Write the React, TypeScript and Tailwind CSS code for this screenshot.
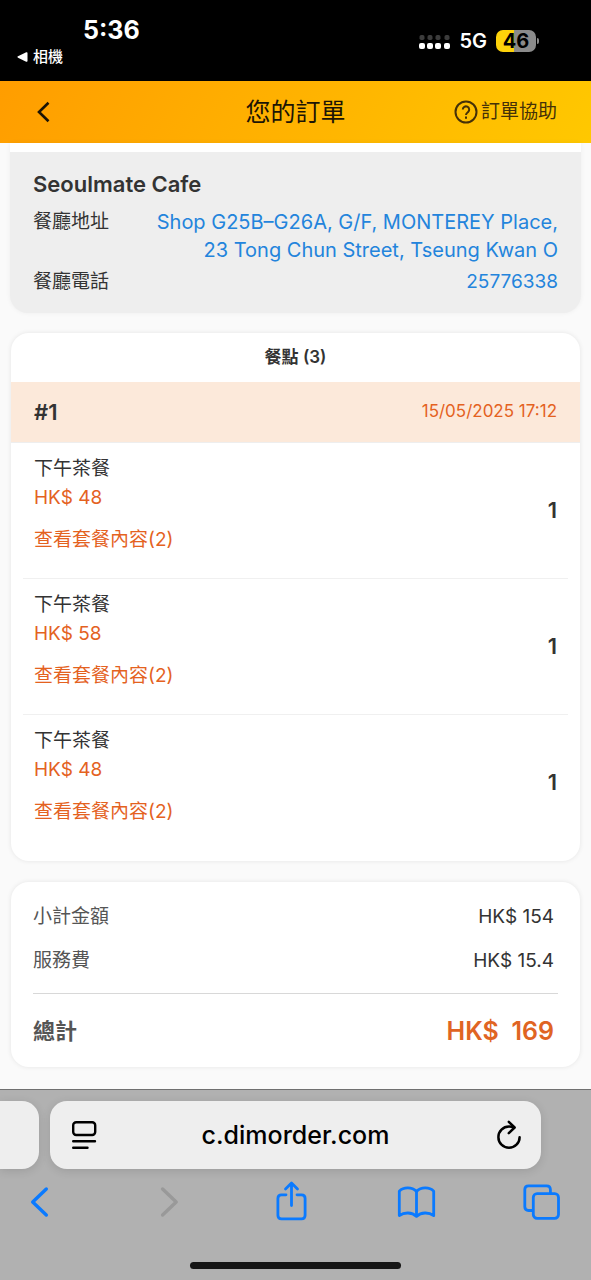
import React from 'react';

interface OrderItem {
  id: number;
  name: string;
  price: string;
  setCount: number;
  quantity: number;
}

const items: OrderItem[] = [
  { id: 1, name: '下午茶餐', price: 'HK$ 48', setCount: 2, quantity: 1 },
  { id: 2, name: '下午茶餐', price: 'HK$ 58', setCount: 2, quantity: 1 },
  { id: 3, name: '下午茶餐', price: 'HK$ 48', setCount: 2, quantity: 1 },
];

const StatusBar: React.FC = () => (
  <div className="flex h-[81px] items-start justify-between bg-black pl-[17px] pr-[52px] pt-4 text-white">
    <div>
      <div className="pl-[66px] text-[25px] font-bold leading-7">5:36</div>
      <button className="flex items-center gap-[5px] text-[15px] font-medium leading-[26px]">
        <svg width="11" height="10" viewBox="0 0 11 10" fill="currentColor" aria-hidden="true">
          <path d="M1 4.3 9.2.3Q10.5 0 10.5 1v8q0 1-1.3.7L1 5.700Q-.2 5 1 4.300z" />
        </svg>
        相機
      </button>
    </div>
    <div className="flex items-center pt-[11px]">
      <svg width="31" height="15" viewBox="0 0 31 15" aria-hidden="true">
        {[0, 8, 16, 25].map((x) => (
          <g key={x}>
            <rect x={x + 0.5} y="1" width="5" height="5" rx="1.8" fill="#3c3c3c" />
            <rect x={x} y="9" width="6" height="6" rx="2" fill="#fff" />
          </g>
        ))}
      </svg>
      <span className="ml-[9px] text-xl font-semibold leading-7">5G</span>
      <div className="ml-[9px] flex h-[22px] w-10 items-center justify-center rounded-[7px] bg-[linear-gradient(90deg,#fdd20a_46%,#8b8b8b_46%)] text-xl font-bold text-black">
        46
      </div>
      <div className="ml-px h-[6px] w-[2px] rounded-r-full bg-[#8b8b8b]" />
    </div>
  </div>
);

const PageHeader: React.FC = () => (
  <header className="grid h-[62px] grid-cols-[1fr_auto_1fr] items-center bg-[linear-gradient(120deg,#ff9d00,#ffc800)] px-[34px]">
    <button aria-label="返回" className="w-7">
      <svg width="28" height="28" viewBox="0 0 28 28" fill="none" stroke="#1c1405" strokeWidth="2.6">
        <path d="M14.500 4.8 5 14l9.500 9.200" />
      </svg>
    </button>
    <h1 className="text-[25px] leading-8 text-[#1c1405]">您的訂單</h1>
    <button className="flex items-center gap-[3px] justify-self-end text-[19px] leading-7 text-[#453108]">
      <svg width="24" height="24" viewBox="0 0 24 24" fill="none" stroke="currentColor" strokeWidth="2">
        <circle cx="12" cy="12" r="10.500" />
        <path d="M8.800 9.600a3.200 3.200 0 1 1 5.200 2.500c-1.200.95-2 1.500-2 2.900" />
        <path d="M12 16.600v2.200" />
      </svg>
      訂單協助
    </button>
  </header>
);

const RestaurantCard: React.FC = () => (
  <section className="mx-[10px] overflow-hidden rounded-b-[18px] bg-[#eeeeee] shadow-[0_0_5px_rgba(0,0,0,0.05)]">
    <div className="h-[9px] bg-white" />
    <div className="px-[23px] pb-[17px] pt-[18px] text-[#333]">
      <h2 className="text-[22px] font-semibold leading-7">Seoulmate Cafe</h2>
      <dl className="mt-[10px] flex flex-col gap-1 text-[19px] leading-7">
        <div className="flex justify-between">
          <dt>餐廳地址</dt>
          <dd className="text-right">
            <a href="#map" className="block text-xl leading-7 text-[#2384dc]">
              Shop G25B–G26A, G/F, MONTEREY Place,
              <br />
              23 Tong Chun Street, Tseung Kwan O
            </a>
          </dd>
        </div>
        <div className="flex justify-between">
          <dt>餐廳電話</dt>
          <dd>
            <a href="tel:25776338" className="block text-[#2384dc]">25776338</a>
          </dd>
        </div>
      </dl>
    </div>
  </section>
);

const ItemRow: React.FC<{ item: OrderItem }> = ({ item }) => (
  <li className="mx-3 flex items-center justify-between border-b border-[#f0f0f0] px-[11px] pb-6 pt-3 last:border-b-0 last:pb-[35px]">
    <div>
      <div className="text-[19px] leading-7 text-[#333]">{item.name}</div>
      <div className="mt-px text-[19px] leading-7 text-[#e4621f]">{item.price}</div>
      <button className="mt-[14px] block text-[19px] leading-7 text-[#e4621f]">
        查看套餐內容({item.setCount})
      </button>
    </div>
    <span className="mt-[10px] text-[22px] font-semibold leading-7 text-[#333]">{item.quantity}</span>
  </li>
);

const OrderCard: React.FC = () => (
  <section className="mx-[11px] mt-5 overflow-hidden rounded-[18px] bg-white shadow-[0_0_5px_rgba(0,0,0,0.09)]">
    <h2 className="flex h-[49px] items-center justify-center text-[17px] font-semibold text-[#333]">餐點 (3)</h2>
    <div className="flex h-[61px] items-center justify-between border-b border-[#eeeeee] bg-[#fce9da] px-[23px]">
      <span className="text-[22px] font-semibold text-[#333]">#1</span>
      <time className="text-[17px] text-[#e4621f]">15/05/2025 17:12</time>
    </div>
    <ul>
      {items.map((item) => (
        <ItemRow key={item.id} item={item} />
      ))}
    </ul>
  </section>
);

const TotalsCard: React.FC = () => (
  <section className="mx-[11px] mb-[22px] mt-[21px] rounded-[18px] bg-white px-[22px] pb-[21px] pt-[21px] shadow-[0_0_5px_rgba(0,0,0,0.09)]">
    <dl className="text-[19px] leading-7">
      <div className="flex justify-between pr-1">
        <dt className="text-[#555]">小計金額</dt>
        <dd className="text-[#333]">HK$ 154</dd>
      </div>
      <div className="mt-4 flex justify-between pr-1">
        <dt className="text-[#555]">服務費</dt>
        <dd className="text-[#333]">HK$ 15.4</dd>
      </div>
      <div className="mt-[18px] flex items-center justify-between border-t border-[#d8d8d8] pr-1 pt-[22px] leading-[30px]">
        <dt className="text-[22px] font-semibold text-[#555]">總計</dt>
        <dd className="whitespace-pre text-[25px] font-semibold text-[#e06423]">HK$  169</dd>
      </div>
    </dl>
  </section>
);

const BrowserBar: React.FC = () => (
  <footer className="mt-auto border-t border-[#707070] bg-[#b1b1b1] pb-[11px] pt-[11px]">
    <div className="flex h-[68px] gap-[11px] pr-[50px]">
      <div className="w-[39px] rounded-r-[17px] bg-[#eeeeee] shadow-[0_2px_10px_rgba(0,0,0,0.12)]" />
      <div className="flex flex-1 items-center justify-between rounded-[17px] bg-[#eeeeee] px-5 shadow-[0_2px_10px_rgba(0,0,0,0.12)]">
        <button aria-label="網頁選單">
          <svg width="28" height="30" viewBox="0 0 28 30" fill="none" stroke="#000" strokeWidth="2.400" strokeLinecap="round">
            <rect x="3.200" y="2.200" width="22" height="12.800" rx="3" />
            <path d="M3.200 21.300h21.800M3.200 27.700H17.500" />
          </svg>
        </button>
        <input
          aria-label="網址"
          defaultValue="c.dimorder.com"
          className="min-w-0 flex-1 bg-transparent text-center text-[25px] font-medium leading-8 text-black outline-none"
        />
        <button aria-label="重新載入">
          <svg width="28" height="30" viewBox="0 0 28 30" fill="none" stroke="#000" strokeWidth="2.500" strokeLinecap="round" strokeLinejoin="round">
            <path d="M26.600 17.200A10.600 10.600 0 1 1 16 6.600c2 0 3.500.3 5 1" />
            <path d="M15.800 1.800 21.600 7.500 15.800 13.200" />
          </svg>
        </button>
      </div>
    </div>
    <nav className="mt-[9px] flex justify-between pl-[19px] pr-[30px]">
      <button aria-label="上一頁">
        <svg width="40" height="48" viewBox="0 0 40 48" fill="none" stroke="#0a7aff" strokeWidth="3.400" strokeLinecap="round" strokeLinejoin="round">
          <path d="M27.300 11 13.700 24l13.600 13" />
        </svg>
      </button>
      <button aria-label="下一頁" disabled>
        <svg width="40" height="48" viewBox="0 0 40 48" fill="none" stroke="#999999" strokeWidth="3.400" strokeLinecap="round" strokeLinejoin="round">
          <path d="M17.600 11 31.200 24l-13.600 13" />
        </svg>
      </button>
      <button aria-label="分享">
        <svg width="40" height="48" viewBox="0 0 40 48" fill="none" stroke="#0a7aff" strokeWidth="2.800" strokeLinecap="round" strokeLinejoin="round">
          <path d="M16 16.800h-4.500q-3.600 0-3.600 3.600v16.800q0 3.600 3.600 3.600h20q3.600 0 3.600-3.600V20.400q0-3.600-3.600-3.600H27" />
          <path d="M21.500 27.500V5.200M15.500 11l6-6 6 6" />
        </svg>
      </button>
      <button aria-label="書籤">
        <svg width="40" height="48" viewBox="0 0 40 48" fill="none" stroke="#0a7aff" strokeWidth="2.800" strokeLinejoin="round">
          <path d="M20.500 13.500C16 8.800 7.500 8.800 3.300 13.200V37.600c5-3.600 12.500-3.600 17.200.8 4.700-4.400 12.200-4.400 17.200-.8V13.200C33.500 8.800 25 8.800 20.500 13.500z" />
          <path d="M20.500 13.500v24.900" />
        </svg>
      </button>
      <button aria-label="分頁">
        <svg width="40" height="48" viewBox="0 0 40 48" fill="none" stroke="#0a7aff" strokeWidth="2.800">
          <path d="M12 32.500H7.600q-3.800 0-3.800-3.800V11.600q0-3.800 3.800-3.800h18q3.800 0 3.800 3.800V15.400" />
          <rect x="12.300" y="15.700" width="25.200" height="24.600" rx="3.800" />
        </svg>
      </button>
    </nav>
    <div className="mx-auto mt-[36px] h-[7px] w-[211px] rounded-full bg-[#161616]" />
  </footer>
);

const App: React.FC = () => (
  <div className="flex min-h-screen flex-col bg-[#fafafa] font-['Inter','Noto_Sans_CJK_TC',sans-serif]">
    <StatusBar />
    <PageHeader />
    <main>
      <RestaurantCard />
      <OrderCard />
      <TotalsCard />
    </main>
    <BrowserBar />
  </div>
);

export default App;
